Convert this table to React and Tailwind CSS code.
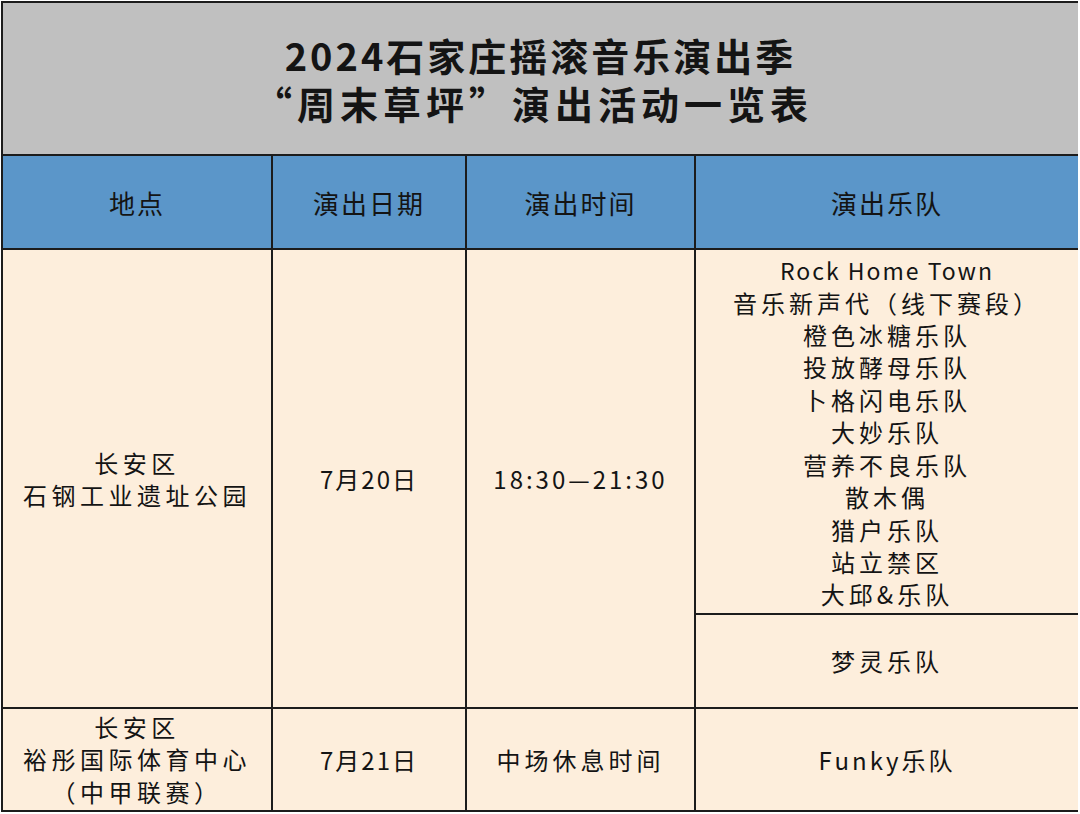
export default function App() {
  const bands = [
    "Rock Home Town",
    "音乐新声代（线下赛段）",
    "橙色冰糖乐队",
    "投放酵母乐队",
    "卜格闪电乐队",
    "大妙乐队",
    "营养不良乐队",
    "散木偶",
    "猎户乐队",
    "站立禁区",
    "大邱&乐队",
  ];
  const cell = "bg-[#fdeedc] flex flex-col items-center justify-center text-center";
  return (
    <div
      className="w-[1080px] h-[814px] bg-white pt-[1px] pl-[1px] text-[#141414]"
      style={{ fontFamily: '"Noto Sans CJK SC", "Noto Sans", sans-serif' }}
    >
      <div className="w-[1077px] bg-[#1c1c1c] p-[2px] grid gap-[2px] grid-cols-[268px_192px_227px_382px] grid-rows-[151px_92px_363px_92px_101px]">
        <div className="col-span-4 bg-[#c0c0c0] flex flex-col items-center justify-center font-bold text-[38px] leading-[48px]">
          <div className="tracking-[3px]">2024石家庄摇滚音乐演出季</div>
          <div className="tracking-[5px] mr-[14px]">“周末草坪”演出活动一览表</div>
        </div>
        {["地点", "演出日期", "演出时间", "演出乐队"].map((h) => (
          <div key={h} className="bg-[#5b96c9] flex items-center justify-center text-[26px] tracking-[2px]">
            {h}
          </div>
        ))}
        <div className={`${cell} row-span-2 text-[24px] tracking-[4.5px] leading-[32px]`}>
          <div>长安区</div>
          <div>石钢工业遗址公园</div>
        </div>
        <div className={`${cell} row-span-2 text-[24px] tracking-[2px]`}>7月20日</div>
        <div className={`${cell} row-span-2 text-[24px] tracking-[3px]`}>18:30—21:30</div>
        <div className={`${cell} text-[24px] tracking-[4px] leading-[32.4px] pt-[2px]`}>
          {bands.map((b) => (
            <div key={b} className={b === "Rock Home Town" ? "tracking-[2px] text-[23px]" : ""}>
              {b}
            </div>
          ))}
        </div>
        <div className={`${cell} text-[24px] tracking-[4px]`}>梦灵乐队</div>
        <div className={`${cell} text-[24px] tracking-[4.5px] leading-[32.5px]`}>
          <div>长安区</div>
          <div>裕彤国际体育中心</div>
          <div>（中甲联赛）</div>
        </div>
        <div className={`${cell} text-[24px] tracking-[2px]`}>7月21日</div>
        <div className={`${cell} text-[24px] tracking-[4px]`}>中场休息时间</div>
        <div className={`${cell} text-[24px] tracking-[3px]`}>Funky乐队</div>
      </div>
    </div>
  );
}
